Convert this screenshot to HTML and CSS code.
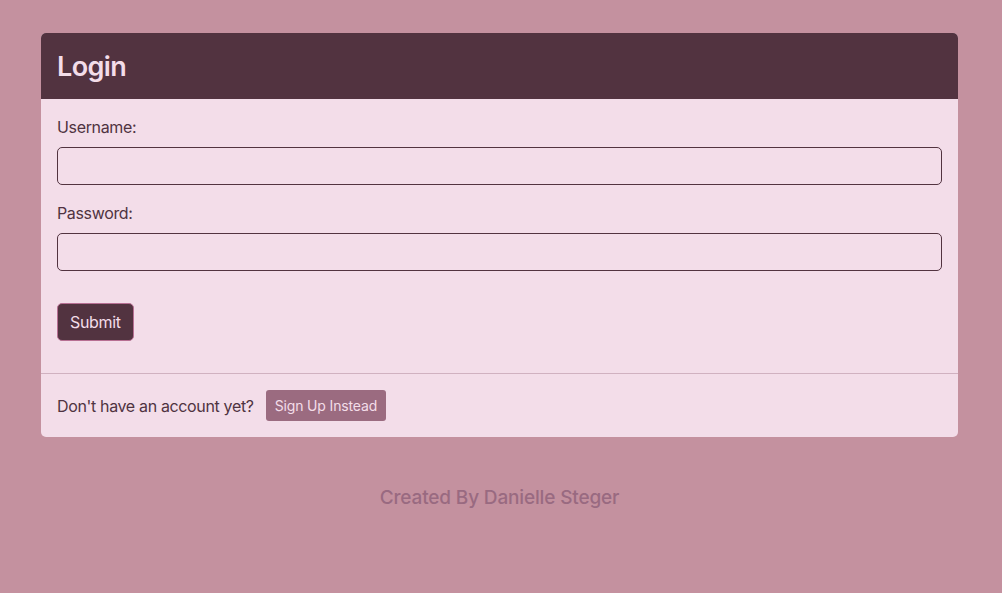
FILE: index.html
```html
<!DOCTYPE html>
<html>
<head>
<meta charset="utf-8">
<link rel="stylesheet" href="styles.css">
</head>
<body>
<div class="page">
  <div class="card">
    <div class="card-header"><h3>Login</h3></div>
    <div class="card-body">
      <label class="label">Username:</label>
      <input class="input" type="text">
      <label class="label">Password:</label>
      <input class="input" type="password">
      <button class="submit">Submit</button>
    </div>
    <div class="card-footer">
      <span class="prompt">Don't have an account yet?</span>
      <button class="signup">Sign Up Instead</button>
    </div>
  </div>
  <p class="credit">Created By Danielle Steger</p>
</div>
</body>
</html>
```
FILE: styles.css
```css
* { box-sizing: border-box; }
html, body { margin: 0; height: 100%; }
body {
  background: #c4919f;
  font-family: Inter, "Noto Sans", sans-serif;
  font-size: 16px;
  color: #4f3341;
}
.page { padding: 33px 44px 0 41px; }
.card {
  background: #f3dde9;
  border-radius: 5px;
  overflow: hidden;
}
.card-header {
  background: #523340;
  padding: 17px 16px 15px;
  height: 66px;
}
.card-header h3 {
  margin: 0;
  font-size: 27px;
  line-height: 34px;
  font-weight: 600;
  letter-spacing: -0.6px;
  color: #f3dde9;
}
.card-body {
  padding: 16px 16px 32px;
  display: flex;
  flex-direction: column;
  align-items: flex-start;
}
.label { line-height: 24px; margin-bottom: 8px; letter-spacing: -0.35px; }
.input {
  width: 100%;
  height: 38px;
  border: 1px solid #523340;
  border-radius: 5px;
  background: #f3dde9;
  margin-bottom: 16px;
  font: inherit;
}
.submit {
  margin-top: 16px;
  height: 38px;
  padding: 0 12px;
  background: #523340;
  color: #f3dde9;
  border: 1px solid #b76f93;
  border-radius: 5px;
  font: inherit;
  font-size: 16px;
  letter-spacing: -0.35px;
}
.card-footer {
  border-top: 1px solid #d0b1c0;
  padding: 16px;
  display: flex;
  align-items: center;
  gap: 12px;
  height: 64px;
}
.prompt { letter-spacing: -0.35px; }
.signup {
  height: 31px;
  padding: 0 9px;
  background: #9b6b80;
  color: #f3dde9;
  border: none;
  border-radius: 3px;
  font: inherit;
  font-size: 14px;
  letter-spacing: -0.15px;
}
.credit {
  text-align: center;
  margin: 49px 0 0;
  font-size: 19px;
  line-height: 24px;
  color: #996a81;
  font-weight: 500;
  letter-spacing: -0.15px;
}
```
